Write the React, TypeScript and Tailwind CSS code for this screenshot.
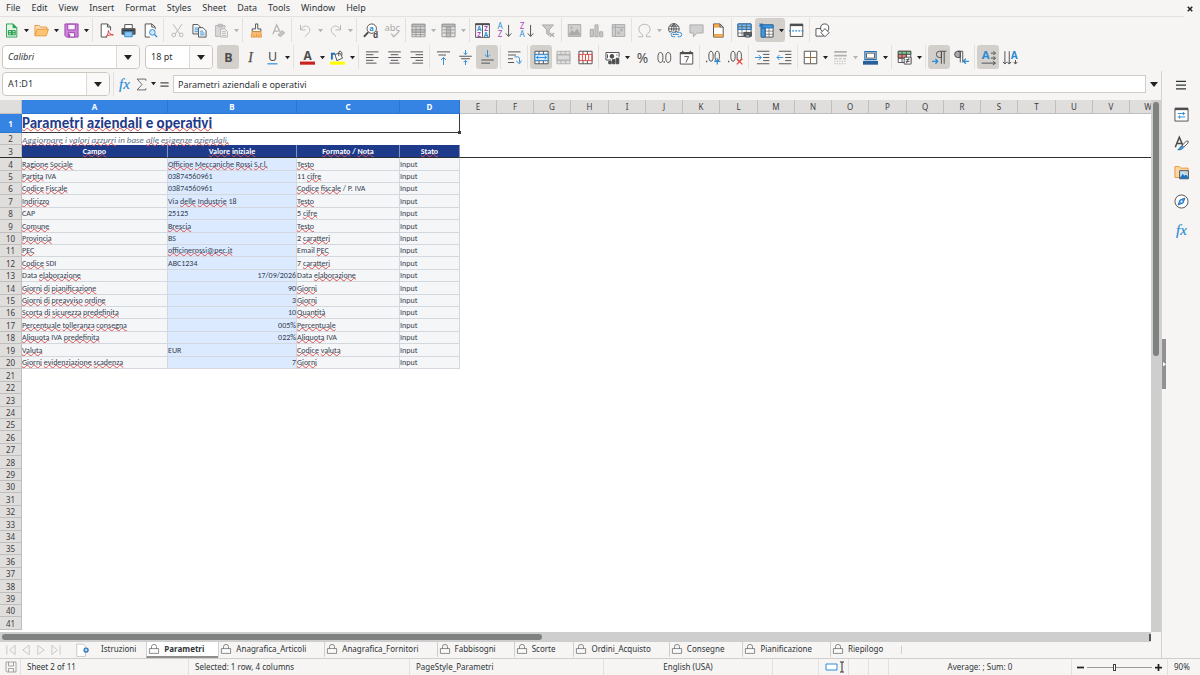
import React, { useState } from 'react';
import clsx from 'clsx';

const DARK = '#4d4d4f';
const GRAY = '#b4b4b4';
const BLUE = '#2a8bd6';

type TextIconProps = { x: number; y: number; size: number; fill?: string; bold?: boolean; children: string };

const T: React.FC<TextIconProps> = ({ x, y, size, fill = DARK, bold, children }) => (
  <text
    x={x}
    y={y}
    fontSize={size}
    fill={fill}
    stroke="none"
    textAnchor="middle"
    fontFamily="'Noto Sans', sans-serif"
    fontWeight={bold ? 700 : 400}
  >
    {children}
  </text>
);

// Icons are drawn on a 24 unit grid, dark outline by default
const ICONS: Record<string, React.ReactNode> = {
  new: (
    <g stroke="#2ea253">
      <path d="M4 1.500h10.500l6 6v15H4z" fill="#e5f6e9" />
      <path d="M14.500 1.500v6h6z" fill="#2ea253" />
      <path d="M7 12h11v7H7zM7 15.500h11M12.500 12v7" fill="#2ea253" />
      <path d="M8 13.800h3M14 13.800h3M8 17.300h3M14 17.300h3" stroke="#e5f6e9" />
    </g>
  ),
  open: (
    <g stroke="#e8953a">
      <path d="M1.500 20V4h7l2 2.500h10V10" fill="#fbe0b5" />
      <path d="M1.500 20.500L5 10h18l-3.500 10.500z" fill="#fdc473" />
    </g>
  ),
  save: (
    <g stroke="#9b41ae">
      <path d="M1.500 1.500h21v21H4l-2.500-2.500z" fill="#cf84dc" />
      <path d="M6 2v9h12V2z" fill="#faf4fb" />
      <path d="M7 22.500v-7h10v7z" fill="#faf4fb" />
      <path d="M9 18v4" strokeWidth="2" />
    </g>
  ),
  pdf: (
    <>
      <path d="M13 22.500H3.500v-21h10l5 5V12" fill="#fff" />
      <path d="M13.500 1.500v5h5" />
      <path d="M11 22c3-3 4-6 4-10 1 5 4 7 8 7-5-.5-9 .500-12 3z" stroke="#d9363e" />
    </>
  ),
  print: (
    <>
      <path d="M6 9V2.500h12V9" fill="#fff" />
      <path d="M1.500 9h21v9h-21z" fill="#5a5d60" />
      <path d="M6 14h12v8H6z" fill="#8fc6f2" stroke={BLUE} />
      <path d="M3 12h18" stroke="#333" />
    </>
  ),
  preview: (
    <>
      <path d="M11 22.500H3.500v-21h11l5 5V10" fill="#fff" />
      <path d="M14 1.500v5h5" />
      <circle cx="15" cy="15" r="4.500" fill="#cfe6fa" stroke={BLUE} />
      <path d="M18.500 18.500l4 4" stroke={BLUE} strokeWidth="2" />
    </>
  ),
  cut: (
    <g stroke={GRAY}>
      <path d="M5 2l10.500 15.500M19 2L8.500 17.500" />
      <circle cx="6" cy="19" r="3" />
      <circle cx="18" cy="19" r="3" />
    </g>
  ),
  copy: (
    <>
      <path d="M1.500 2.500h8l4 4v11h-12z" fill="#fff" />
      <path d="M4 8h6M4 11h6M4 14h6" stroke={BLUE} />
      <path d="M10.500 7.500h7l5 5v10h-12z" fill="#fff" />
      <path d="M13 13h5M13 16h7M13 19h7" stroke={BLUE} />
    </>
  ),
  paste: (
    <g stroke={GRAY}>
      <path d="M9 21.500H2.500V4h15v4" fill="#d8d8d8" />
      <path d="M6.500 2h7v4h-7z" fill="#c4c4c4" />
      <path d="M10.500 9.500h7l4 4v9h-11z" fill="#f3f3f3" />
      <path d="M13 14h6M13 17h6M13 20h6" />
    </g>
  ),
  clone: (
    <>
      <path d="M10.500 1.500h3.500v8h5v4h-14v-4h5.500z" fill="#fff" />
      <path d="M5 14h14l1 8.500H3.500z" fill="#f7c07c" stroke="#e8953a" />
      <path d="M8 22v-4M12 22v-5M16 22v-4" stroke="#e8953a" />
    </>
  ),
  clear: (
    <g stroke={GRAY}>
      <path d="M3 18L9 3l6 12M5 13h7" strokeWidth="2" />
      <path d="M11 19l7-7 4 4-7 6z" fill="#c4c4c4" />
    </g>
  ),
  undo: <path d="M4 3v8h8M4 11c3-6 9-8 13-4s2 8-6 15" stroke={GRAY} />,
  redo: <path d="M20 3v8h-8M20 11c-3-6-9-8-13-4s-2 8 6 15" stroke={GRAY} />,
  find: (
    <>
      <circle cx="14" cy="9" r="7.500" fill="#fff" />
      <path d="M8.500 14.500L1.500 22" strokeWidth="3" />
      <T x={13.500} y={13} size={12} fill={BLUE} bold>a</T>
      <T x={20} y={23.500} size={13} bold>d</T>
    </>
  ),
  spell: (
    <>
      <T x={11.500} y={13} size={15} fill="#aaa">abc</T>
      <path d="M10 17l4 5 9-9" stroke={GRAY} strokeWidth="2" />
    </>
  ),
  row: (
    <g stroke="#999">
      <path d="M1.500 2h21v20h-21z" fill="#e2e2e2" />
      <path d="M2 2h20v4H2zM2 10h20v5H2z" fill="#bcbcbc" />
      <path d="M8 6v16M15 6v16M2 18.500h20" />
    </g>
  ),
  col: (
    <g stroke="#999">
      <path d="M1.500 2h21v20h-21z" fill="#e2e2e2" />
      <path d="M2 2h20v4H2zM8.500 6h7v16h-7z" fill="#bcbcbc" />
      <path d="M2 11h20M2 16h20" />
    </g>
  ),
  sort: (
    <>
      <path d="M1 1.500h22v21.500H1z" fill="#fff" />
      <path d="M0.500 2h23" strokeWidth="3" />
      <path d="M12 2v20" />
      <T x={6.500} y={13} size={10} fill={BLUE} bold>A</T>
      <T x={6.500} y={22} size={10} fill="#a946bd" bold>Z</T>
      <T x={17.500} y={13} size={10} fill="#a946bd" bold>Z</T>
      <T x={17.500} y={22} size={10} fill={BLUE} bold>A</T>
    </>
  ),
  asc: (
    <>
      <T x={5} y={10} size={13} fill={BLUE}>A</T>
      <T x={5} y={23} size={13} fill="#a946bd">Z</T>
      <path d="M18.500 3v18M14 16.500l4.500 5 4.500-5" />
    </>
  ),
  desc: (
    <>
      <T x={5} y={10} size={13} fill="#a946bd">Z</T>
      <T x={5} y={23} size={13} fill={BLUE}>A</T>
      <path d="M18.500 3v18M14 16.500l4.500 5 4.500-5" />
    </>
  ),
  filter: (
    <g stroke="#aaa">
      <path d="M2 3h18l-7 8v9l-4-3v-6z" fill="#c8c8c8" />
      <path d="M14 16l7 6M21 16l-7 6" strokeWidth="2" />
    </g>
  ),
  image: (
    <g stroke="#aaa">
      <path d="M2 2.500h20v19H2z" fill="#d0d0d0" />
      <path d="M3 19l5-7 4 4 4-6 5 9z" fill="#aaa" />
      <circle cx="7" cy="7.500" r="1.500" />
    </g>
  ),
  chart: (
    <g stroke="#aaa" fill="#c8c8c8">
      <path d="M2 10h5v12H2zM9.500 3h5v19h-5zM17 14h5v8h-5z" />
    </g>
  ),
  pivot: (
    <g stroke="#aaa">
      <path d="M2 2.500h20v19H2z" fill="#d0d0d0" />
      <path d="M2 7h20M7 2v20" />
      <path d="M11 17l7-7M14 10h4v4M11 13v4h4" />
    </g>
  ),
  omega: <path d="M2 22h7v-3C4 16 3 12 3 9.500 3 5 7 2 12 2s9 3 9 7.500c0 2.500-1 6.500-6 9.500v3h7" stroke={GRAY} />,
  link: (
    <>
      <circle cx="11" cy="9.500" r="8.500" fill="#fff" />
      <path d="M3 9.500h16M11 1v17M4.500 5h13M4.500 14h13M11 1c-5 5-5 12 0 17M11 1c5 5 5 12 0 17" />
      <path d="M13 15h-3a3.500 3.500 0 0 0 0 7h3M17 15h3a3.500 3.500 0 0 1 0 7h-3M12 18.500h7" stroke="#f6f5f4" strokeWidth="4" />
      <path d="M13 15h-3a3.500 3.500 0 0 0 0 7h3M17 15h3a3.500 3.500 0 0 1 0 7h-3M12 18.500h7" stroke={BLUE} />
    </>
  ),
  comment: <path d="M1.500 3h21v13H13l-6 6v-6H1.500z" fill="#d0d0d0" stroke="#aaa" />,
  header: (
    <>
      <path d="M4 1.500h10.500l5 5v16H4z" fill="#fff" />
      <path d="M5 2.500h9v4H5zM5 18.500h14v3.500H5z" fill="#f5b469" stroke="#e8953a" />
      <path d="M14.500 1.500v5h5" />
    </>
  ),
  printArea: (
    <>
      <path d="M1.500 1.500h21v20h-21z" fill="#fff" />
      <path d="M1.500 1.500h21v9h-21z" fill="#79b9ee" stroke="#2271b8" />
      <path d="M1.500 6h21M8 1.500v20M15 1.500v20M1.500 16h21" strokeWidth="1" />
      <path d="M11 15h12v6H11z" fill="#5a5d60" />
      <path d="M13.500 19h7v3.500h-7z" fill="#8fc6f2" />
    </>
  ),
  freeze: (
    <>
      <path d="M3.500 3h19v19.500h-19z" fill="#fff" />
      <path d="M3.500 3h19v5h-19zM3.500 8h6.500v14.500H3.500z" fill="#3f97df" stroke="#2271b8" />
      <path d="M10 8v14.500M16 8v14.500M10 13h12.500M10 18h12.500" strokeWidth="1" />
      <path d="M3.500 0v7M0 3.500h7M1 1l5 5M6 1L1 6" stroke="#2271b8" />
    </>
  ),
  split: (
    <>
      <path d="M2 2.500h20v19H2z" fill="#fff" />
      <path d="M1.500 3h21" strokeWidth="4" />
      <path d="M0 12.500h24" stroke={BLUE} strokeDasharray="3 2" strokeWidth="2" />
    </>
  ),
  shapes: (
    <>
      <path d="M1.500 9h12v12h-12z" fill="#fff" />
      <circle cx="15.500" cy="8" r="6.500" fill="#fff" />
      <path d="M16 9l6.500 6.500L16 22l-6.500-6.500z" fill="#fff" />
    </>
  ),
  bold: <T x={12} y={19} size={20} bold>B</T>,
  italic: (
    <text x="12" y="19" fontSize="22" textAnchor="middle" fontStyle="italic" fill={DARK} stroke={DARK} strokeWidth="0.400" fontFamily="'Liberation Serif', serif">I</text>
  ),
  underline: (
    <>
      <T x={12} y={17} size={20}>U</T>
      <path d="M4 22h16" stroke="#5aa5e6" strokeWidth="2.500" />
    </>
  ),
  fontColor: (
    <>
      <T x={12} y={16} size={19} bold>A</T>
      <path d="M0 21h24" stroke="#c9211e" strokeWidth="5" />
    </>
  ),
  highlight: (
    <>
      <path d="M8 7l8-2 4 8-9 4z" fill="#fff" />
      <path d="M3 15V6h5" stroke="#2271b8" strokeWidth="3" />
      <path d="M14 10V3q2-3 5 1v5" />
      <path d="M0 21h24" stroke="#ff0" strokeWidth="5" />
    </>
  ),
  left: <path d="M1.500 3h20M1.500 7.500h12M1.500 12h20M1.500 16.500h12M1.500 21h17" />,
  center: <path d="M2 3h20M6 7.500h12M2 12h20M6 16.500h12M4 21h16" />,
  right: <path d="M2.500 3h20M10.500 7.500h12M2.500 12h20M10.500 16.500h12M5.500 21h17" />,
  top: (
    <>
      <path d="M1.500 3h21M4 8h12" />
      <path d="M12 24V12M8 16l4-4 4 4" stroke={BLUE} />
    </>
  ),
  middle: (
    <>
      <path d="M2 10h20M5 14h14" />
      <path d="M12 0v7M9 4.500l3 3 3-3M12 24v-7M9 19.500l3-3 3 3" stroke={BLUE} />
    </>
  ),
  bottom: (
    <>
      <path d="M2 16h20M2 21h14" />
      <path d="M12 0v11M8 7.500l4 4 4-4" stroke={BLUE} />
    </>
  ),
  wrap: (
    <>
      <path d="M1.500 3h20M1.500 8h13M1.500 14h8M1.500 20h10" />
      <path d="M12 11h5q3 0 3 3v6M15 18l5 4 3-5" stroke={BLUE} />
    </>
  ),
  merge: (
    <>
      <path d="M1.500 2h21v20h-21z" fill="#fff" />
      <path d="M8 2v20M15 2v20M1.500 7h21M1.500 17h21" />
      <path d="M1.500 7h21v10h-21z" fill="#d5eafb" stroke={BLUE} />
      <path d="M4 12h16M7 9.500L4 12l3 2.500M17 9.500l3 2.500-3 2.500" stroke={BLUE} />
    </>
  ),
  mergeCells: (
    <g stroke="#b0b0b0">
      <path d="M1.500 2h21v20h-21z" fill="#e2e2e2" />
      <path d="M8 2v20M15 2v20M1.500 7h21M1.500 17h21" />
      <path d="M2 8h20v8H2z" fill="#dcdcdc" />
    </g>
  ),
  unmerge: (
    <>
      <path d="M1.500 2h21v20h-21z" fill="#fff" />
      <path d="M8 2v5M15 2v5M8 17v5M15 17v5" />
      <path d="M1.500 7h21v10h-21zM7 7v10M12 7v10M17 7v10" stroke="#e0443e" />
    </>
  ),
  currency: (
    <>
      <path d="M10 16H1.500V4h21v7" fill="#fff" />
      <circle cx="11" cy="10" r="3" fill={DARK} />
      <path d="M4 7v6M19 7v2" />
      <path d="M12 15h4v7h-4zM18 13h4v9h-4zM6 18h4v4H6z" fill={DARK} />
    </>
  ),
  percent: <T x={12} y={20} size={22}>%</T>,
  number: (
    <>
      <ellipse cx="5.500" cy="12" rx="4" ry="8" />
      <ellipse cx="18" cy="12" rx="4" ry="8" />
      <path d="M11.500 18v2.500" strokeWidth="2" />
    </>
  ),
  date: (
    <>
      <path d="M2 4h20v18.500H2z" fill="#fff" />
      <path d="M2 5h20" strokeWidth="3.500" />
      <path d="M6 1v3M18 1v3" strokeWidth="2" />
      <path d="M8.500 10.500h7L11 20" />
    </>
  ),
  addDecimal: (
    <>
      <ellipse cx="8" cy="10" rx="3.500" ry="8" />
      <ellipse cx="18" cy="10" rx="3.500" ry="8" />
      <path d="M1 17v2.500" strokeWidth="2" />
      <path d="M18 13v10M13 18h10" stroke={BLUE} strokeWidth="2" />
    </>
  ),
  delDecimal: (
    <>
      <ellipse cx="8" cy="10" rx="3.500" ry="8" />
      <ellipse cx="18" cy="10" rx="3.500" ry="8" />
      <path d="M1 17v2.500" strokeWidth="2" />
      <path d="M14 14l9 9M23 14l-9 9" stroke="#e0443e" strokeWidth="2" />
    </>
  ),
  indentMore: (
    <>
      <path d="M3 2h20M13 7h10M13 12h10M13 17h10M3 22h20" />
      <path d="M0 12h10M6 8l4 4-4 4" stroke={BLUE} />
    </>
  ),
  indentLess: (
    <>
      <path d="M3 2h20M13 7h10M13 12h10M13 17h10M3 22h20" />
      <path d="M0 12h10M4 8l-4 4 4 4" stroke={BLUE} />
    </>
  ),
  borders: (
    <>
      <path d="M2 2h20v20H2z" fill="#fff" />
      <path d="M12 2v20M2 12h20" stroke="#e8953a" />
      <path d="M12 2v20M2 12h20" strokeDasharray="10 1" strokeOpacity="0.600" />
    </>
  ),
  lineStyle: (
    <g stroke="#b0b0b0">
      <path d="M2 3h20M2 9h20" strokeWidth="3" />
      <path d="M2 14h20" strokeDasharray="5 2" />
      <path d="M2 18h20M2 22h20" strokeDasharray="2 2" />
    </g>
  ),
  borderColor: (
    <>
      <path d="M3 2.500h18v13H3z" fill="#fff" stroke="#2271b8" strokeWidth="2" />
      <path d="M5.500 5h13v8h-13z" />
      <path d="M0 20.500h24" stroke="#2a6099" strokeWidth="6" />
    </>
  ),
  conditional: (
    <>
      <path d="M2 2h20v18H2z" fill="#fff" />
      <path d="M2 2h20v5H2z" fill="#7ccf8e" />
      <path d="M2 7h13v6H2z" fill="#ef7b72" />
      <path d="M8 2v18M15 2v11M2 13h8" />
      <path d="M11.500 11.500h11v11h-11z" fill="#fff" />
      <path d="M14 15.500h6M14 18.500h6M19 13l-4 8" />
    </>
  ),
  ltr: (
    <>
      <path d="M23 2H12a5 5 0 0 0 0 10h3V2" fill="none" />
      <path d="M15 2v20M19.500 2v20" />
      <path d="M0 18h9M5.500 14L9 18l-3.500 4" stroke={BLUE} strokeWidth="2" />
    </>
  ),
  rtl: (
    <>
      <path d="M10 2H6a5 5 0 0 0 0 10h4z" fill="#aaa" />
      <path d="M14 2H6M10 2v18M14 2v18" />
      <path d="M24 18h-8M19 14l-4 4 4 4" stroke={BLUE} strokeWidth="2" />
    </>
  ),
  textLtr: (
    <>
      <T x={7.500} y={15} size={18} fill={BLUE} bold>A</T>
      <path d="M16 5h7M20 2l3 3-3 3M16 13h7M20 10l3 3-3 3M1 21h22M19 18l4 3-4 3" />
    </>
  ),
  textTtb: (
    <>
      <T x={18} y={14} size={16} fill={BLUE} bold>A</T>
      <path d="M3 2v20M0 19l3 3.500 3-3.500M10 2v20M7 19l3 3.500 3-3.500M20 16v6M17 19l3 3.500 3-3.500" />
    </>
  ),
  sigma: <path d="M20 5V2H4l9 10-9 10h16v-3" />,
  equals: <path d="M3 8.500h18M3 15.500h18" strokeWidth="3" />,
  fx: (
    <text x="12" y="19" fontSize="24" textAnchor="middle" fontStyle="italic" fill={BLUE} stroke={BLUE} strokeWidth="0.300" fontFamily="'Liberation Serif', serif">fx</text>
  ),
  menu: <path d="M2 4.500h20M2 12h20M2 19.500h20" stroke="#2e3436" strokeWidth="2.500" />,
  properties: (
    <>
      <path d="M1.500 2.500h21v20h-21z" fill="#fff" />
      <path d="M1.500 3h21" strokeWidth="4" />
      <path d="M6 10.500h12M15 8v5M6 16h12M9 13.500v5" stroke={BLUE} />
    </>
  ),
  styles: (
    <>
      <path d="M2 18L8.500 2l6 14M4.500 12h8" strokeWidth="2.500" />
      <path d="M13 15l7-7q4-1 2.500 3l-7 7z" fill="#fff" />
      <path d="M6 22c3 0 3-6 7-6 4 2 0 7-7 6z" fill="#4a9de0" stroke="#2271b8" />
    </>
  ),
  gallery: (
    <>
      <path d="M1.500 20V2.500h7l2 2.500h12v15z" fill="#fcd7a0" stroke="#e8953a" />
      <path d="M9 9h14v13H9z" fill="#bfe0f8" />
      <path d="M10 21l4-6 3 3 2-2 4 5z" fill="#2271b8" stroke="#2271b8" />
      <circle cx="19" cy="12.500" r="1.300" fill="#f3c24f" stroke="none" />
    </>
  ),
  navigator: (
    <>
      <circle cx="12" cy="12" r="10.500" fill="#fff" />
      <path d="M17.500 6.500l-3 8-8 3 3-8z" fill="#4a9de0" stroke="#2271b8" />
      <circle cx="12" cy="12" r="1.500" fill="#fff" stroke="none" />
    </>
  ),
  lock: (
    <>
      <path d="M1 11h22v11.500H1z" fill="#fafafa" />
      <path d="M6 11V6.500a6 5.500 0 0 1 12 0V11" />
    </>
  ),
  disk: (
    <g stroke="#8a8a8a">
      <path d="M2 2h20v20H4l-2-2z" />
      <path d="M7 2v8h10V2M7 22v-7h10v7" />
    </g>
  ),
  addSheet: (
    <>
      <path d="M3 23V2h11l4 4v17z" fill="#fff" stroke="#c4c4c4" />
      <circle cx="19" cy="12" r="4.500" fill="#2271b8" stroke="none" />
      <path d="M16.500 12h5M19 9.500v5" stroke="#fff" />
    </>
  ),
};

const Icon: React.FC<{ name: string; className?: string }> = ({ name, className = 'size-[15px]' }) => (
  <svg viewBox="0 0 24 24" className={clsx('shrink-0 overflow-visible', className)} fill="none" stroke={DARK} strokeWidth="1.500" aria-hidden="true">
    {ICONS[name]}
  </svg>
);

const Caret: React.FC<{ muted?: boolean; big?: boolean }> = ({ muted, big }) => (
  <svg viewBox="0 0 8 5" className={clsx('shrink-0', big ? 'w-2' : 'w-[5px]', muted ? 'fill-[#b4b4b4]' : 'fill-[#222]')} aria-hidden="true">
    <path d="M0 0h8L4 5z" />
  </svg>
);

// '|' is a separator, ':' a narrow one; '+' adds a drop-down arrow,
// '*' marks a pressed button and '-' a disabled one
const STANDARD_BAR =
  'new+ open+ save+ | pdf print preview | cut- copy paste+- | clone clear- | undo+- redo+- | find spell- : row+- col+- : sort asc desc filter- : image- chart- pivot- : omega+- link comment- header : printArea freeze+* split : shapes';
const FORMAT_BAR =
  'bold* italic underline+ | fontColor+ highlight+ | left center right | top middle bottom* | wrap | merge* mergeCells- unmerge | currency+ percent number date | addDecimal delDecimal | indentMore indentLess : borders+ lineStyle+- borderColor+ : conditional+ | ltr* rtl | textLtr* textTtb';

const ToolItems: React.FC<{ spec: string }> = ({ spec }) => (
  <>
    {spec.split(' ').map((token, i) => {
      if (token === '|' || token === ':') {
        return (
          <div key={i} className={clsx('flex shrink-0 justify-center', token === '|' ? 'w-[5px]' : 'w-1')}>
            <div className="h-6 w-px bg-[#e2e1df]" />
          </div>
        );
      }
      const name = token.replace(/[^a-zA-Z]/g, '');
      const pressed = token.includes('*');
      const disabled = token.includes('-');
      return (
        <div key={i} className={clsx('flex h-6 shrink-0 rounded-[3px]', pressed && 'bg-[#d3d0cc]')}>
          <button aria-label={name} aria-pressed={pressed || undefined} disabled={disabled} className="flex w-[22px] items-center justify-center">
            <Icon name={name} />
          </button>
          {token.includes('+') && (
            <button aria-label={`${name} options`} disabled={disabled} className="flex w-2 items-center justify-center pt-0.5">
              <Caret muted={disabled} />
            </button>
          )}
        </div>
      );
    })}
  </>
);

const Combo: React.FC<{ label: string; value: string; className: string; italic?: boolean }> = ({ label, value, className, italic }) => (
  <div className={clsx('flex h-6 shrink-0 overflow-hidden rounded-[4px] border border-[#cdc7c2] bg-white', className)}>
    <input aria-label={label} defaultValue={value} className={clsx('w-0 min-w-0 flex-1 pl-[5px] text-[9px] text-[#2e3436] outline-none', italic && 'italic')} />
    <button aria-label={`${label} list`} className="flex w-[23px] items-center justify-center border-l border-[#dcd9d6] bg-[#faf9f8]">
      <Caret big />
    </button>
  </div>
);

// Words between tildes get the spell-check underline
const Spelled: React.FC<{ text: string }> = ({ text }) => (
  <>
    {text.split('~').map((part, i) =>
      i % 2 ? (
        <span key={i} className="underline decoration-[#e05050] decoration-wavy decoration-1 -underline-offset-1 [text-decoration-skip-ink:none]">
          {part}
        </span>
      ) : (
        part
      )
    )}
  </>
);

const MENUS = ['File', 'Edit', 'View', 'Insert', 'Format', 'Styles', 'Sheet', 'Data', 'Tools', 'Window', 'Help'];

const PARAMS: string[][] = [
  ['~Ragione~ ~Sociale~', '~Officine~ ~Meccaniche~ ~Rossi~ ~S.r.l.~', '~Testo~'],
  ['~Partita~ IVA', '03874560961', '11 ~cifre~'],
  ['~Codice~ ~Fiscale~', '03874560961', '~Codice~ ~fiscale~ / P. IVA'],
  ['~Indirizzo~', 'Via ~delle~ ~Industrie~ 18', '~Testo~'],
  ['CAP', '25125', '5 ~cifre~'],
  ['~Comune~', '~Brescia~', '~Testo~'],
  ['~Provincia~', 'BS', '2 ~caratteri~'],
  ['~PEC~', '~officinerossi@pec.it~', 'Email ~PEC~'],
  ['~Codice~ SDI', 'ABC1234', '7 ~caratteri~'],
  ['Data ~elaborazione~', '17/09/2026', 'Data ~elaborazione~'],
  ['~Giorni~ ~di~ ~pianificazione~', '90', '~Giorni~'],
  ['~Giorni~ ~di~ ~preavviso~ ~ordine~', '3', '~Giorni~'],
  ['~Scorta~ ~di~ ~sicurezza~ ~predefinita~', '10', '~Quantità~'],
  ['~Percentuale~ ~tolleranza~ ~consegna~', '005%', '~Percentuale~'],
  ['~Aliquota~ IVA ~predefinita~', '022%', '~Aliquota~ IVA'],
  ['~Valuta~', 'EUR', '~Codice~ ~valuta~'],
  ['~Giorni~ ~evidenziazione~ ~scadenza~', '7', '~Giorni~'],
];

const RIGHT_ALIGNED = ['17/09/2026', '90', '3', '10', '005%', '022%', '7'];

const SHEETS = ['Istruzioni', 'Parametri', 'Anagrafica_Articoli', 'Anagrafica_Fornitori', 'Fabbisogni', 'Scorte', 'Ordini_Acquisto', 'Consegne', 'Pianificazione', 'Riepilogo'];

const columnName = (i: number): string =>
  i < 26 ? String.fromCharCode(65 + i) : columnName(Math.floor(i / 26) - 1) + columnName(i % 26);

const RowHead: React.FC<{ n: number; active?: boolean }> = ({ n, active }) => (
  <th
    scope="row"
    className={clsx(
      'border-r border-b p-0 text-center',
      active ? 'border-[#2a76d0] bg-[#3584e4] font-bold text-white' : 'border-[#c0bfbd] bg-[#dfdedd] font-normal text-[#3d3d3d]'
    )}
  >
    {n}
  </th>
);

const Grid: React.FC = () => {
  // Only the cells that fit the window are rendered
  const extraCols = Math.max(1, Math.ceil((window.innerWidth - 509) / 37.25));
  const extraRows = Math.max(1, Math.floor((window.innerHeight - 412) / 12.4));
  const columns = Array.from({ length: 4 + extraCols }, (_, i) => columnName(i));
  const emptyRows = Array.from({ length: extraRows }, (_, i) => i + 21);

  return (
    <table className="w-max table-fixed border-separate border-spacing-0 text-[8px] leading-[11px]">
      <colgroup>
        <col className="w-[22px]" />
        <col className="w-[146px]" />
        <col className="w-[129px]" />
        <col className="w-[103px]" />
        <col className="w-[60px]" />
        {columns.slice(4).map((c, i) => (
          <col key={c} className={i % 4 === 3 ? 'w-[38px]' : 'w-[37px]'} />
        ))}
      </colgroup>
      <thead>
        <tr className="h-[14px]">
          <th className="border-r border-b border-[#c0bfbd] bg-[#dfdedd] p-0" aria-label="Select all" />
          {columns.map((c, i) => (
            <th
              key={c}
              scope="col"
              className={clsx(
                'border-r border-b p-0 text-center',
                i < 4 ? 'border-[#2a76d0] bg-[#3584e4] text-white' : 'border-[#c0bfbd] bg-[#dfdedd] font-normal text-[#3d3d3d]'
              )}
            >
              {c}
            </th>
          ))}
        </tr>
      </thead>
      <tbody className="font-[Carlito,Lato,sans-serif] text-[#364152] [&_th]:font-['Noto_Sans',sans-serif]">
        <tr className="h-[19px]">
          <RowHead n={1} active />
          <td colSpan={4} className="relative border-r border-b border-[#3a3a3a] bg-white p-0 text-[15px] leading-[16px] font-bold whitespace-nowrap text-[#1e3a8a]">
            <Spelled text="~Parametri~ ~aziendali~ e ~operativi~" />
            <span className="absolute -right-0.5 -bottom-0.5 size-[3px] bg-[#3a3a3a]" />
          </td>
        </tr>
        <tr className="h-3">
          <RowHead n={2} />
          <td colSpan={4} className="p-0 text-[9px] whitespace-nowrap text-[#64748b] italic">
            <Spelled text="~Aggiornare~ i ~valori~ ~azzurri~ in base ~alle~ ~esigenze~ ~aziendali.~" />
          </td>
        </tr>
        <tr className="h-[13px] font-bold text-white">
          <th scope="row" className="border-r border-b border-r-[#c0bfbd] border-b-[#2e2e2e] bg-[#dfdedd] p-0 font-normal text-[#3d3d3d]">
            3
          </th>
          {['~Campo~', '~Valore~ ~iniziale~', '~Formato~ / ~Nota~', '~Stato~'].map((h) => (
            <td key={h} className="border-r border-b border-r-[#8292bd] border-b-[#2e2e2e] bg-[#1e3a8a] p-0 text-center">
              <Spelled text={h} />
            </td>
          ))}
          <td colSpan={extraCols} className="border-b border-[#2e2e2e] p-0" />
        </tr>
        {PARAMS.map(([field, value, note], i) => (
          <tr
            key={field}
            className={clsx(
              'whitespace-nowrap [&_td]:border-r [&_td]:border-b [&_td]:border-[#d3d8de] [&_td]:p-0',
              i % 5 === 0 || i % 5 === 3 ? 'h-[13px]' : 'h-3'
            )}
          >
            <RowHead n={i + 4} />
            <td className="bg-[#f4f6f8]"><Spelled text={field} /></td>
            <td className={clsx('bg-[#dbeafe]', RIGHT_ALIGNED.includes(value) && 'text-right')}><Spelled text={value} /></td>
            <td className="bg-[#f4f6f8]"><Spelled text={note} /></td>
            <td className="bg-[#f4f6f8]">Input</td>
          </tr>
        ))}
        {emptyRows.map((n) => (
          <tr key={n} className={n % 5 === 1 || n % 5 === 3 ? 'h-[13px]' : 'h-3'}>
            <RowHead n={n} />
          </tr>
        ))}
      </tbody>
    </table>
  );
};

const STATUS_CELL = 'flex items-center border-l border-[#e2e1df] px-[6px]';

const App: React.FC = () => {
  const [sheet, setSheet] = useState('Parametri');
  const [zoom, setZoom] = useState(90);

  return (
    <div className="flex h-screen flex-col overflow-hidden bg-[#f6f5f4] font-['Noto_Sans',sans-serif] text-[#2e3436]">
      {/* Menu bar */}
      <header className="flex h-[17px] shrink-0 items-center">
        <nav className="flex h-full flex-1 items-center gap-[11px] border-b border-[#e2e1df] pl-[6px] text-[9px]">
          {MENUS.map((m) => (
            <button key={m}>{m}</button>
          ))}
        </nav>
        <button aria-label="Close" className="flex w-4 items-center justify-center">
          <svg viewBox="0 0 8 8" className="mr-1 size-[6px]" stroke="#222" strokeWidth="2" aria-hidden="true">
            <path d="M1 1l6 6M7 1L1 7" />
          </svg>
        </button>
      </header>

      {/* Toolbars */}
      <div className="flex h-[26px] shrink-0 items-center">
        <ToolItems spec={STANDARD_BAR} />
      </div>
      <div className="flex h-7 shrink-0 items-center pl-[2px]">
        <Combo label="Font name" value="Calibri" className="mr-[5px] w-[138px]" italic />
        <Combo label="Font size" value="18 pt" className="mr-1 w-[68px]" />
        <ToolItems spec={FORMAT_BAR} />
      </div>

      <div className="flex min-h-0 flex-1">
        <main className="flex min-w-0 flex-1 flex-col">
          {/* Formula bar */}
          <div className="flex h-[29px] shrink-0 items-start pt-px pl-[2px]">
            <Combo label="Name box" value="A1:D1" className="w-[108px]" />
            <div className="ml-[3px] h-6 w-px bg-[#e2e1df]" />
            <div className="flex h-6 flex-1 items-center">
              <button aria-label="Function wizard" className="flex w-[21px] justify-center"><Icon name="fx" /></button>
              <button aria-label="Select function" className="flex w-[21px] items-center justify-between">
                <Icon name="sigma" className="size-[13px]" />
                <Caret />
              </button>
              <button aria-label="Formula" className="flex w-[17px] justify-center"><Icon name="equals" className="size-[11px]" /></button>
              <input
                aria-label="Input line"
                defaultValue="Parametri aziendali e operativi"
                className="h-[18px] min-w-0 flex-1 border border-[#cfccc9] bg-white pl-1 text-[9px] outline-none"
              />
              <button aria-label="Expand formula bar" className="flex w-[15px] justify-center"><Caret big /></button>
            </div>
          </div>

          {/* Sheet area */}
          <div className="flex min-h-0 flex-1">
            <div className="min-w-0 flex-1 overflow-hidden bg-white">
              <Grid />
            </div>
            <div className="w-[10px] bg-[#cecece] px-[2px] pt-[2px]">
              <div className="h-[48%] w-[6px] rounded-full bg-[#7f8180]" />
            </div>
          </div>
          <div className="flex h-[10px] shrink-0 items-center pr-[10px]">
            <div className="flex h-full flex-1 items-center justify-between bg-[#cecece] pl-[2px]">
              <div className="h-[6px] w-[47%] rounded-full bg-[#7f8180]" />
              <div className="h-[7px] w-0.5 bg-[#555]" />
            </div>
          </div>

          {/* Sheet tabs */}
          <div className="flex h-4 shrink-0 items-stretch text-[8px]">
            <div className="flex w-[69px] items-center gap-[3px] pl-[5px]">
              {['M2 1v10M11 1L5 6l6 5z', 'M10 1L3 6l7 5z', 'M3 1l7 5-7 5z', 'M2 1l6 5-6 5zM11 1v10'].map((d) => (
                <button key={d} aria-label="Scroll tabs">
                  <svg viewBox="0 0 13 12" className="size-3" fill="none" stroke="#c6c5c3" aria-hidden="true"><path d={d} /></svg>
                </button>
              ))}
            </div>
            <button aria-label="Add sheet" className="flex w-[30px] items-center justify-center pr-[5px]"><Icon name="addSheet" className="size-[14px]" /></button>
            <div role="tablist" className="flex min-w-0 flex-1 overflow-hidden">
              {SHEETS.map((s, i) => (
                <button
                  key={s}
                  role="tab"
                  aria-selected={s === sheet}
                  onClick={() => setSheet(s)}
                  className={clsx(
                    'flex shrink-0 items-center gap-[5px] border-b-2 pl-0.5',
                    i > 0 && 'border-l border-l-[#d0cfcd]',
                    i === 0 ? 'pr-[10px]' : s === sheet ? 'pr-[14px]' : 'pr-[18px]',
                    s === sheet ? 'border-b-[#8e8e8e] bg-white font-bold' : 'border-b-transparent'
                  )}
                >
                  {i > 0 && <Icon name="lock" className="size-[10px]" />}
                  {s}
                </button>
              ))}
              <div className="my-1 w-px bg-[#d0cfcd]" />
            </div>
          </div>
        </main>

        {/* Sidebar */}
        <aside className="relative flex w-[39px] shrink-0 flex-col items-center gap-[14px] border-l border-[#d3d2d0] pt-2">
          <button aria-label="Sidebar settings" className="pb-0.5"><Icon name="menu" className="size-3" /></button>
          {['properties', 'styles', 'gallery', 'navigator', 'fx'].map((n) => (
            <button key={n} aria-label={n}><Icon name={n} /></button>
          ))}
          <button aria-label="Hide sidebar" className="absolute top-[268px] left-0 flex h-[50px] w-1 items-center justify-center bg-[#919191]">
            <svg viewBox="0 0 4 6" className="w-[3px] fill-white" aria-hidden="true"><path d="M0 0l4 3-4 3z" /></svg>
          </button>
        </aside>
      </div>

      {/* Status bar */}
      <footer className="grid h-[17px] shrink-0 grid-cols-[20px_168fr_221fr_194fr_169fr_46px_30px_20px_20px_183fr_96px_33px] border-t border-[#cfcecc] text-[8px]">
        <div className="flex items-center justify-end pr-[3px]"><Icon name="disk" className="size-3" /></div>
        <div className={STATUS_CELL}>Sheet 2 of 11</div>
        <div className={STATUS_CELL}>Selected: 1 row, 4 columns</div>
        <div className={STATUS_CELL}>PageStyle_Parametri</div>
        <div className={clsx(STATUS_CELL, 'justify-center')}>English (USA)</div>
        <div className={STATUS_CELL} />
        <div className={STATUS_CELL}>
          <svg viewBox="0 0 20 12" className="h-3 w-5 shrink-0" fill="none" aria-hidden="true">
            <path d="M1 3h11v6H1z" fill="#fff" stroke={BLUE} />
            <path d="M15 1h4M17 1v10M15 11h4" stroke="#333" />
          </svg>
        </div>
        <div className={STATUS_CELL} />
        <div className={STATUS_CELL} />
        <div className={clsx(STATUS_CELL, 'justify-center')}>Average: ; Sum: 0</div>
        <div className="flex items-center gap-[3px] border-l border-[#e2e1df] px-[5px]">
          <button aria-label="Zoom out" onClick={() => setZoom(zoom - 5)}>
            <svg viewBox="0 0 8 8" className="size-[7px]" stroke="#222" strokeWidth="2" aria-hidden="true"><path d="M0 4h8" /></svg>
          </button>
          <input
            type="range"
            aria-label="Zoom"
            min={20}
            max={185}
            value={zoom}
            onChange={(e) => setZoom(Number(e.target.value))}
            className="h-2 min-w-0 flex-1 appearance-none bg-transparent bg-[linear-gradient(#9a9a9a,#9a9a9a)] bg-[length:100%_1px] bg-center bg-no-repeat [&::-webkit-slider-thumb]:h-[7px] [&::-webkit-slider-thumb]:w-[3px] [&::-webkit-slider-thumb]:appearance-none [&::-webkit-slider-thumb]:border [&::-webkit-slider-thumb]:border-[#444] [&::-webkit-slider-thumb]:bg-white"
          />
          <button aria-label="Zoom in" onClick={() => setZoom(zoom + 5)}>
            <svg viewBox="0 0 8 8" className="size-[7px]" stroke="#222" strokeWidth="2" aria-hidden="true"><path d="M0 4h8M4 0v8" /></svg>
          </button>
        </div>
        <div className={STATUS_CELL}>{zoom}%</div>
      </footer>
    </div>
  );
};

export default App;
